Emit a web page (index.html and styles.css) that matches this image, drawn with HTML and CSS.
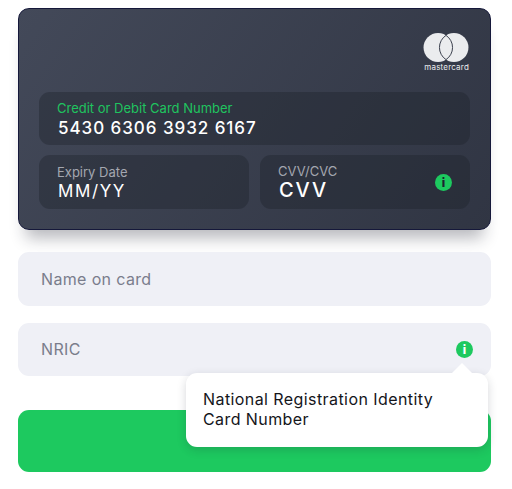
FILE: index.html
```html
<!DOCTYPE html>
<html lang="en">

<head>
    <meta charset="UTF-8">
    <meta name="viewport" content="width=device-width, initial-scale=1.0">
    <title>Card details</title>
    <link rel="stylesheet" href="styles.css">
</head>

<body>
    <div class="form">
        <div class="card">
            <div class="card-brand">
                <svg class="brand-mark" width="48" height="31" viewBox="0 0 48 31">
                    <circle cx="15.5" cy="15.5" r="15.5" fill="#ebecee" />
                    <circle cx="32.5" cy="15.5" r="15.5" fill="#ebecee" />
                    <path d="M24 2.54A15.5 15.5 0 0 1 24 28.46A15.5 15.5 0 0 1 24 2.54z" fill="#ebecee" stroke="#2f3442" stroke-width="1" />
                </svg>
                <span class="brand-name">mastercard</span>
            </div>
            <div class="field">
                <span class="field-label field-label-active">Credit or Debit Card Number</span>
                <span class="field-value field-number">5430 6306 3932 6167</span>
            </div>
            <div class="field-row">
                <div class="field">
                    <span class="field-label">Expiry Date</span>
                    <span class="field-value field-expiry">MM/YY</span>
                </div>
                <div class="field field-cvv">
                    <div>
                        <span class="field-label">CVV/CVC</span>
                        <span class="field-value field-code">CVV</span>
                    </div>
                    <span class="info info-card">i</span>
                </div>
            </div>
        </div>

        <div class="input">Name on card</div>

        <div class="input input-nric">
            NRIC
            <span class="info">i</span>
            <div class="tooltip">National Registration Identity Card Number</div>
        </div>

        <button type="button" class="submit"></button>
    </div>
</body>

</html>
```

FILE: styles.css
```css
body {
    margin: 0;
    background: #fff;
    font-family: Inter, "Liberation Sans", sans-serif;
}

.form {
    display: flex;
    flex-direction: column;
    width: 473px;
    margin: 8px 0 0 18px;
}

.card {
    box-sizing: border-box;
    height: 222px;
    padding: 24px 20px 0 20px;
    border: 1px solid #15183a;
    border-radius: 11px;
    background: linear-gradient(125deg, #434959, #303543);
    box-shadow: 0 16px 16px -8px rgba(30, 33, 50, 0.32);
}

.card-brand {
    display: flex;
    flex-direction: column;
    align-items: flex-end;
    height: 39px;
    margin-bottom: 20px;
}

.brand-mark {
    display: block;
}

.brand-name {
    color: #ebecee;
    font-size: 8px;
    line-height: 10px;
    letter-spacing: 0.2px;
    margin-right: 1px;
}

.field {
    box-sizing: border-box;
    height: 53px;
    padding: 8px 18px 0 18px;
    border-radius: 11px;
    background: rgba(30, 33, 42, 0.38);
}

.field-row {
    display: flex;
    gap: 11px;
    margin-top: 10px;
}

.field-row .field {
    flex: 1;
    height: 54px;
    padding-top: 9px;
}

.field-row .field-cvv {
    display: flex;
    justify-content: space-between;
    align-items: center;
    padding-top: 0;
}

.field-label {
    display: block;
    color: #a4a7b0;
    font-size: 13px;
    line-height: 16px;
}

.field-label-active {
    color: #1fc45f;
}

.field-value {
    display: block;
    margin-left: 1px;
    color: #fff;
    font-size: 17px;
    line-height: 22px;
    letter-spacing: 1.5px;
}

.field-number {
    margin-top: 1px;
    font-weight: 500;
    letter-spacing: 0.95px;
}

.field-expiry {
    letter-spacing: 1.6px;
}

.field-code {
    font-size: 20px;
    font-weight: 500;
    line-height: 23px;
    letter-spacing: 1.9px;
}

.info {
    display: flex;
    justify-content: center;
    align-items: center;
    width: 17px;
    height: 17px;
    border-radius: 50%;
    background: #1dc95f;
    color: #fff;
    font-size: 12px;
    font-weight: 800;
}

.info-card {
    color: #1d2230;
}

.input {
    position: relative;
    display: flex;
    justify-content: space-between;
    align-items: center;
    box-sizing: border-box;
    height: 54px;
    margin-top: 22px;
    padding: 0 18px 0 23px;
    border-radius: 11px;
    background: #eff0f6;
    color: #7a7d8c;
    font-size: 16px;
    letter-spacing: 0.35px;
}

.input-nric {
    height: 53px;
    margin-top: 17px;
    padding-bottom: 1px;
}

.tooltip {
    position: absolute;
    top: 50px;
    right: 3px;
    box-sizing: border-box;
    width: 302px;
    height: 74px;
    padding: 16px 40px 16px 17px;
    border-radius: 11px;
    background: #fff;
    box-shadow: 0 3px 10px rgba(30, 33, 50, 0.18);
    color: #14151a;
    font-size: 16px;
    line-height: 20px;
    letter-spacing: 0.42px;
    z-index: 1;
}

.tooltip::before {
    content: "";
    position: absolute;
    top: -10px;
    right: 15px;
    border-left: 11px solid transparent;
    border-right: 11px solid transparent;
    border-bottom: 11px solid #fff;
}

.submit {
    height: 62px;
    margin-top: 34px;
    border: none;
    border-radius: 11px;
    background: #1dc95f;
}
```
